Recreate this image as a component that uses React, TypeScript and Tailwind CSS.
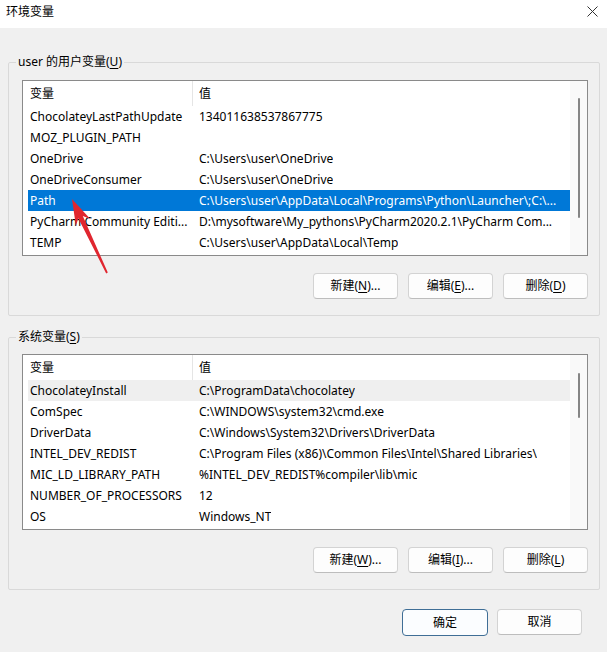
import React from "react";

type Row = { name: string; value: string; state?: "sel" | "hover" };

const userVars: Row[] = [
  { name: "ChocolateyLastPathUpdate", value: "134011638537867775" },
  { name: "MOZ_PLUGIN_PATH", value: "" },
  { name: "OneDrive", value: "C:\\Users\\user\\OneDrive" },
  { name: "OneDriveConsumer", value: "C:\\Users\\user\\OneDrive" },
  {
    name: "Path",
    value: "C:\\Users\\user\\AppData\\Local\\Programs\\Python\\Launcher\\;C:\\...",
    state: "sel",
  },
  {
    name: "PyCharm Community Editi...",
    value: "D:\\mysoftware\\My_pythons\\PyCharm2020.2.1\\PyCharm Com...",
  },
  { name: "TEMP", value: "C:\\Users\\user\\AppData\\Local\\Temp" },
];

const systemVars: Row[] = [
  { name: "ChocolateyInstall", value: "C:\\ProgramData\\chocolatey", state: "hover" },
  { name: "ComSpec", value: "C:\\WINDOWS\\system32\\cmd.exe" },
  { name: "DriverData", value: "C:\\Windows\\System32\\Drivers\\DriverData" },
  {
    name: "INTEL_DEV_REDIST",
    value: "C:\\Program Files (x86)\\Common Files\\Intel\\Shared Libraries\\",
  },
  { name: "MIC_LD_LIBRARY_PATH", value: "%INTEL_DEV_REDIST%compiler\\lib\\mic" },
  { name: "NUMBER_OF_PROCESSORS", value: "12" },
  { name: "OS", value: "Windows_NT" },
];

function Acc({ k }: { k: string }) {
  return <span className="underline underline-offset-2">{k}</span>;
}

function VarList({ rows, thumbTop, thumbH }: { rows: Row[]; thumbTop: string; thumbH: string }) {
  return (
    <div className="flex h-[176px] overflow-hidden border border-[#8a8a8a] bg-white">
      <div className="min-w-0 flex-1 pl-[5px]">
        <div className="flex h-[25px] items-center">
          <div className="flex h-full w-[165px] shrink-0 items-center border-r border-[#e5e5e5] pl-[2px]">
            变量
          </div>
          <div className="pl-[6px]">值</div>
        </div>
        {rows.map((r) => (
          <div
            key={r.name}
            className={`flex h-[21px] items-center ${
              r.state === "sel"
                ? "bg-[#0078d7] text-white"
                : r.state === "hover"
                ? "bg-[#efefef]"
                : ""
            }`}
          >
            <div className="w-[165px] shrink-0 overflow-hidden whitespace-nowrap pl-[2px]">
              {r.name}
            </div>
            <div className="min-w-0 overflow-hidden whitespace-nowrap pl-[6px]">{r.value}</div>
          </div>
        ))}
      </div>
      <div className="flex w-[17px] shrink-0 justify-center bg-[#f9f9f9]">
        <div className={`w-[2px] rounded-full bg-[#858585] ${thumbTop} ${thumbH}`} />
      </div>
    </div>
  );
}

function Btn({ children, primary }: { children: React.ReactNode; primary?: boolean }) {
  return (
    <button
      className={`rounded-[4px] border text-[12px] ${
        primary
          ? "h-[27px] w-[86px] border-[#3f6e96] bg-[#fbfdff]"
          : "h-[26px] w-[85px] border-[#d3d3d3] border-b-[#bdbdbd] bg-[#fdfdfd]"
      }`}
    >
      {children}
    </button>
  );
}

function Group({
  title,
  children,
  className,
}: {
  title: React.ReactNode;
  children: React.ReactNode;
  className: string;
}) {
  return (
    <fieldset className={`ml-[8px] mr-[7px] rounded-[2px] border border-[#d9d9d9] ${className}`}>
      <legend className="ml-[7px] px-[2px] leading-[16px]">{title}</legend>
      <div className="pb-[16px] pl-[13px] pr-[11px]">{children}</div>
    </fieldset>
  );
}

export default function App() {
  return (
    <div className="relative flex h-[652px] w-[607px] flex-col overflow-hidden bg-[#f0f0f0] font-['Noto_Sans','Noto_Sans_CJK_SC',sans-serif] text-[12px] text-black">
      <div className="flex h-[28px] items-start justify-between bg-white pl-[6px] pr-[9px] pt-[4px]">
        <span className="leading-[16px]">环境变量</span>
        <svg width="11" height="11" viewBox="0 0 11 11" className="mt-[2px]">
          <path d="M0.5 0.5L10.5 10.5M10.5 0.5L0.5 10.5" stroke="#333" strokeWidth="1" />
        </svg>
      </div>

      <Group
        className="mt-[26px]"
        title={
          <>
            user 的用户变量(<Acc k="U" />)
          </>
        }
      >
        <div className="mt-[10px]">
          <VarList rows={userVars} thumbTop="mt-[17px]" thumbH="h-[120px]" />
        </div>
        <div className="mt-[17px] flex justify-end gap-[10px]">
          <Btn>
            新建(<Acc k="N" />)...
          </Btn>
          <Btn>
            编辑(<Acc k="E" />)...
          </Btn>
          <Btn>
            删除(<Acc k="D" />)
          </Btn>
        </div>
      </Group>

      <Group
        className="mt-[13px]"
        title={
          <>
            系统变量(<Acc k="S" />)
          </>
        }
      >
        <div className="mt-[9px]">
          <VarList rows={systemVars} thumbTop="mt-[18px]" thumbH="h-[45px]" />
        </div>
        <div className="mt-[17px] flex justify-end gap-[10px]">
          <Btn>
            新建(<Acc k="W" />)...
          </Btn>
          <Btn>
            编辑(<Acc k="I" />)...
          </Btn>
          <Btn>
            删除(<Acc k="L" />)
          </Btn>
        </div>
      </Group>

      <div className="mt-[19px] flex justify-end gap-[9px] pr-[25px]">
        <Btn primary>确定</Btn>
        <Btn>取消</Btn>
      </div>

      <svg
        className="pointer-events-none absolute left-0 top-0"
        width="607"
        height="652"
        viewBox="0 0 607 652"
      >
        <polygon
          points="72,199 90.3,219.1 82.8,216 107.8,272.6 106.2,273.4 78.3,218.2 75.9,225.9"
          fill="#e0262f"
        />
      </svg>
    </div>
  );
}
